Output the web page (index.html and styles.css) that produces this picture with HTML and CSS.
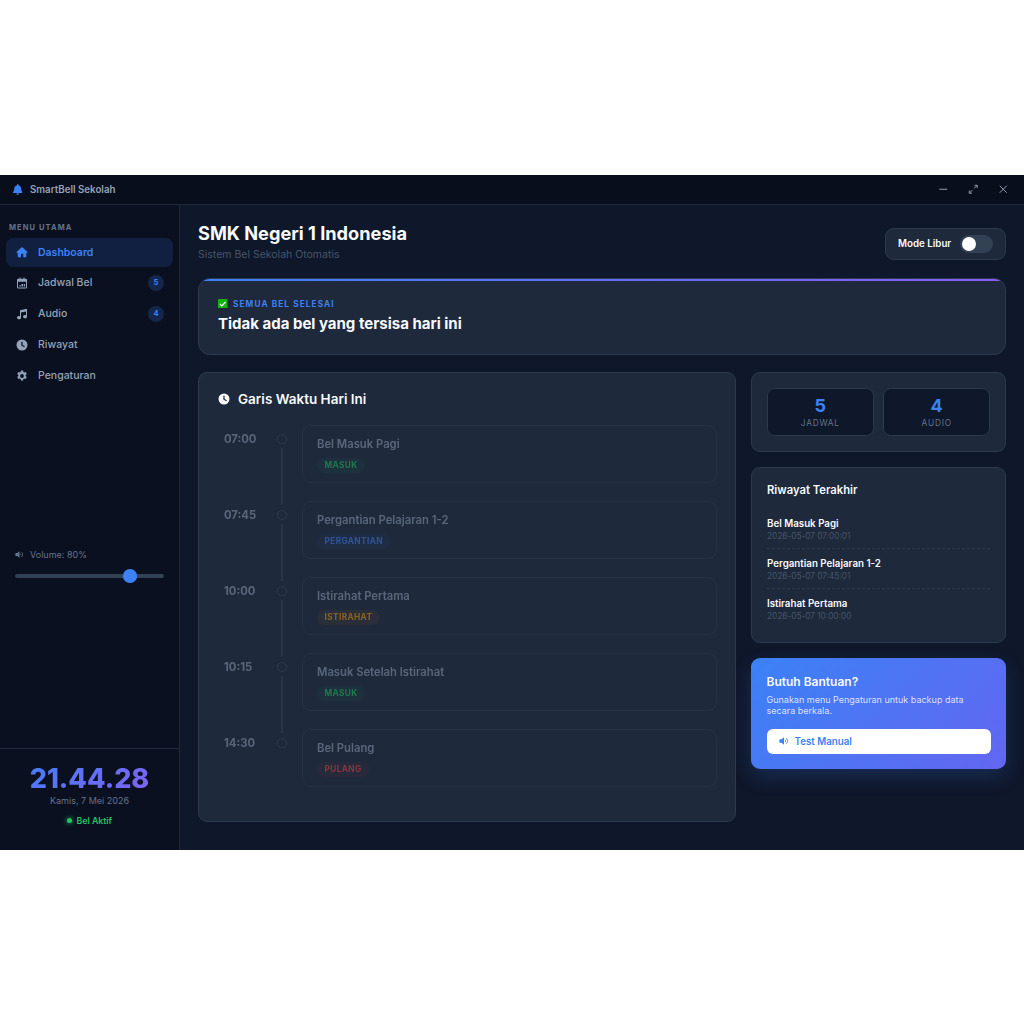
FILE: index.html
```html
<!DOCTYPE html>
<html lang="id">
<head>
  <meta charset="UTF-8">
  <title>SmartBell Sekolah</title>
  <link rel="stylesheet" href="styles.css">
</head>
<body>
  <svg class="defs" width="0" height="0">
    <symbol id="i-bell" viewBox="0 0 448 512"><path d="M224 512c35.32 0 63.97-28.65 63.97-64H160.03c0 35.35 28.65 64 63.97 64zm215.39-149.71c-19.32-20.76-55.47-51.99-55.47-154.29 0-77.7-54.48-139.9-127.94-155.16V32c0-17.67-14.32-32-31.98-32s-31.98 14.33-31.98 32v20.84C118.56 68.1 64.08 130.3 64.08 208c0 102.3-36.15 133.53-55.47 154.29-6 6.45-8.66 14.16-8.61 21.71.11 16.4 12.98 32 32.1 32h383.8c19.12 0 32-15.6 32.1-32 .05-7.55-2.61-15.27-8.61-21.71z"/></symbol>
    <symbol id="i-home" viewBox="0 0 24 24"><path d="M12 2 0.500 12.400l1.500 1.700 1.500-1.300V21a1.500 1.500 0 0 0 1.500 1.500h5V15.500h4.500v7h5A1.500 1.500 0 0 0 20.500 21v-8.200l1.500 1.300 1.500-1.700z"/></symbol>
    <symbol id="i-cal" viewBox="0 0 24 24"><path fill-rule="evenodd" d="M7 1h2v2.500h6V1h2v2.500h2.500A2.500 2.500 0 0 1 22 6v14.500a2.500 2.500 0 0 1-2.500 2.500h-15A2.500 2.500 0 0 1 2 20.500V6a2.500 2.500 0 0 1 2.500-2.500H7zM4 9.500v11a.5.5 0 0 0 .5.5h15a.5.5 0 0 0 .5-.5v-11z"/><path d="M11 14h3v5h-3zM15.500 14H18v5h-2.500zM7 16h2.500v3H7z"/></symbol>
    <symbol id="i-music" viewBox="0 0 24 24"><path d="M22 1.500 8 4.500V16.700A4.200 4.200 0 0 0 6 16.200c-2.300 0-4 1.400-4 3.200s1.700 3.100 4 3.100 4-1.400 4-3.200V9.200l10-2.100v7.600a4.200 4.200 0 0 0-2-.5c-2.300 0-4 1.400-4 3.200s1.700 3.100 4 3.100 4-1.400 4-3.200z"/></symbol>
    <symbol id="i-clock" viewBox="0 0 24 24"><path fill-rule="evenodd" d="M12 1a11 11 0 1 1 0 22 11 11 0 0 1 0-22zm-1.300 4.500v7.700l5.800 3.400 1.200-2-4.500-2.600V5.500z"/></symbol>
    <symbol id="i-gear" viewBox="0 0 24 24"><path fill-rule="evenodd" d="M14.200 1l.5 3.100 1.700 1 2.900-1.100 2.200 3.800-2.400 2 .1 1.200-.1 1.200 2.400 2-2.200 3.800-2.900-1.100-1.700 1-.5 3.100H9.800l-.5-3.100-1.700-1-2.900 1.100-2.200-3.800 2.400-2-.1-1.200.1-1.200-2.400-2L4.700 4l2.900 1.100 1.700-1L9.800 1zM12 8.200a3.800 3.800 0 1 0 0 7.600 3.800 3.800 0 0 0 0-7.600z"/></symbol>
    <symbol id="i-vol" viewBox="0 0 24 24"><path d="M12 3v18l-6-5H2a1 1 0 0 1-1-1V9a1 1 0 0 1 1-1h4zM15 8.500a4.500 4.500 0 0 1 0 7zM18 5a9 9 0 0 1 0 14l-1-1.600a7 7 0 0 0 0-10.800z"/></symbol>
  </svg>

  <div class="app">
    <header class="titlebar">
      <div class="brand">
        <svg class="brand-icon"><use href="#i-bell"/></svg>
        <span>SmartBell Sekolah</span>
      </div>
      <div class="win-btns">
        <svg viewBox="0 0 12 12"><path d="M1.500 6h9"/></svg>
        <svg viewBox="0 0 12 12"><path d="M7 5l3.500-3.500M7.500 1.500h3v3M5 7l-3.500 3.500M4.500 10.500h-3v-3"/></svg>
        <svg viewBox="0 0 12 12"><path d="M2 2l8 8M10 2l-8 8"/></svg>
      </div>
    </header>

    <div class="body">
      <aside class="sidebar">
        <div class="menu-label">MENU UTAMA</div>
        <nav class="nav">
          <a class="nav-item active"><svg><use href="#i-home"/></svg><span>Dashboard</span></a>
          <a class="nav-item"><svg><use href="#i-cal"/></svg><span>Jadwal Bel</span><b class="count">5</b></a>
          <a class="nav-item"><svg><use href="#i-music"/></svg><span>Audio</span><b class="count">4</b></a>
          <a class="nav-item"><svg><use href="#i-clock"/></svg><span>Riwayat</span></a>
          <a class="nav-item"><svg><use href="#i-gear"/></svg><span>Pengaturan</span></a>
        </nav>
        <div class="volume">
          <div class="volume-label"><svg><use href="#i-vol"/></svg><span>Volume: 80%</span></div>
          <input class="volume-range" type="range" min="0" max="100" value="80">
        </div>
        <div class="clock-box">
          <div class="clock">21.44.28</div>
          <div class="clock-date">Kamis, 7 Mei 2026</div>
          <div class="bell-status"><i class="status-dot"></i>Bel Aktif</div>
        </div>
      </aside>

      <main class="main">
        <div class="page-head">
          <div class="page-title">
            <h1>SMK Negeri 1 Indonesia</h1>
            <p>Sistem Bel Sekolah Otomatis</p>
          </div>
          <div class="holiday">
            <span>Mode Libur</span>
            <div class="switch"><i></i></div>
          </div>
        </div>

        <section class="banner">
          <div class="banner-label">
            <svg class="check" viewBox="0 0 10 10"><rect width="10" height="10" rx="1"/><path d="M2 5.200l2.100 2.100L8 3"/></svg>
            <span>SEMUA BEL SELESAI</span>
          </div>
          <div class="banner-title">Tidak ada bel yang tersisa hari ini</div>
        </section>

        <div class="columns">
          <section class="card timeline">
            <h2 class="timeline-title"><svg><use href="#i-clock"/></svg>Garis Waktu Hari Ini</h2>

            <div class="tl-row">
              <div class="tl-time">07:00</div>
              <div class="tl-axis"><i class="tl-dot"></i><i class="tl-line"></i></div>
              <div class="tl-card"><div class="tl-name">Bel Masuk Pagi</div><span class="tag tag-green">MASUK</span></div>
            </div>
            <div class="tl-row">
              <div class="tl-time">07:45</div>
              <div class="tl-axis"><i class="tl-dot"></i><i class="tl-line"></i></div>
              <div class="tl-card"><div class="tl-name">Pergantian Pelajaran 1-2</div><span class="tag tag-blue">PERGANTIAN</span></div>
            </div>
            <div class="tl-row">
              <div class="tl-time">10:00</div>
              <div class="tl-axis"><i class="tl-dot"></i><i class="tl-line"></i></div>
              <div class="tl-card"><div class="tl-name">Istirahat Pertama</div><span class="tag tag-amber">ISTIRAHAT</span></div>
            </div>
            <div class="tl-row">
              <div class="tl-time">10:15</div>
              <div class="tl-axis"><i class="tl-dot"></i><i class="tl-line"></i></div>
              <div class="tl-card"><div class="tl-name">Masuk Setelah Istirahat</div><span class="tag tag-green">MASUK</span></div>
            </div>
            <div class="tl-row">
              <div class="tl-time">14:30</div>
              <div class="tl-axis"><i class="tl-dot"></i></div>
              <div class="tl-card"><div class="tl-name">Bel Pulang</div><span class="tag tag-red">PULANG</span></div>
            </div>
          </section>

          <div class="side-col">
            <section class="card stats">
              <div class="stat"><strong>5</strong><span>JADWAL</span></div>
              <div class="stat"><strong>4</strong><span>AUDIO</span></div>
            </section>

            <section class="card history">
              <h3>Riwayat Terakhir</h3>
              <div class="hist-item"><div class="hist-name">Bel Masuk Pagi</div><div class="hist-date">2026-05-07 07:00:01</div></div>
              <div class="hist-item"><div class="hist-name">Pergantian Pelajaran 1-2</div><div class="hist-date">2026-05-07 07:45:01</div></div>
              <div class="hist-item"><div class="hist-name">Istirahat Pertama</div><div class="hist-date">2026-05-07 10:00:00</div></div>
            </section>

            <section class="help">
              <h3>Butuh Bantuan?</h3>
              <p>Gunakan menu Pengaturan untuk backup data secara berkala.</p>
              <button class="test-btn"><svg><use href="#i-vol"/></svg>Test Manual</button>
            </section>
          </div>
        </div>
      </main>
    </div>
  </div>
</body>
</html>
```

FILE: styles.css
```css
* {
  box-sizing: border-box;
  margin: 0;
  padding: 0;
}
body {
  font-family: 'Inter', 'Liberation Sans', sans-serif;
  background: #ffffff;
  height: 100vh;
  display: flex;
  align-items: center;
  overflow: hidden;
}
.defs {
  position: absolute;
}
svg {
  fill: currentColor;
  flex: none;
}
.app {
  width: 100%;
  height: 675px;
  background: #0f172a;
  color: #f8fafc;
  display: flex;
  flex-direction: column;
}

/* title bar */
.titlebar {
  height: 30px;
  flex: none;
  background: #090e1c;
  border-bottom: 1.500px solid #1e293b;
  display: flex;
  align-items: center;
  justify-content: space-between;
  padding: 0 16px 0 13px;
}
.brand {
  display: flex;
  align-items: center;
  gap: 7.500px;
  font-size: 9.750px;
  font-weight: 600;
  color: #94a3b8;
}
.brand-icon {
  width: 9.500px;
  height: 11px;
  color: #3b82f6;
}
.win-btns {
  display: flex;
  gap: 19.500px;
}
.win-btns svg {
  width: 10.500px;
  height: 10.500px;
  fill: none;
  stroke: #94a3b8;
  stroke-width: 1.100;
}

.body {
  flex: 1;
  display: flex;
  min-height: 0;
}

/* sidebar */
.sidebar {
  width: 180px;
  flex: none;
  background: #0a1020;
  border-right: 1px solid #1e293b;
  display: flex;
  flex-direction: column;
}
.menu-label {
  font-size: 7.500px;
  font-weight: 700;
  letter-spacing: 1.100px;
  color: #64748b;
  padding: 18px 9px 6px;
}
.nav {
  padding: 0 6px;
  display: flex;
  flex-direction: column;
  gap: 1.900px;
}
.nav-item {
  height: 29px;
  display: flex;
  align-items: center;
  gap: 10px;
  padding: 0 9px 0 10px;
  border-radius: 7.500px;
  font-size: 10.500px;
  font-weight: 500;
  color: #94a3b8;
}
.nav-item svg {
  width: 12px;
  height: 12px;
}
.nav-item.active {
  background: rgba(59, 130, 246, 0.15);
  color: #3b82f6;
  font-weight: 600;
}
.count {
  margin-left: auto;
  width: 16px;
  height: 16px;
  border-radius: 50%;
  background: rgba(59, 130, 246, 0.2);
  color: #3b82f6;
  font-size: 7.500px;
  font-weight: 700;
  display: flex;
  align-items: center;
  justify-content: center;
}
.volume {
  margin-top: auto;
  margin-bottom: 165px;
  padding: 0 15px;
}
.volume-label {
  display: flex;
  align-items: center;
  gap: 6px;
  font-size: 9px;
  color: #64748b;
  margin-bottom: 9px;
}
.volume-label svg {
  width: 9px;
  height: 9px;
}
.volume-range {
  display: block;
  width: 100%;
  height: 13.500px;
  margin: 0;
  background: transparent;
  -webkit-appearance: none;
  appearance: none;
}
.volume-range::-webkit-slider-runnable-track {
  height: 4.500px;
  border-radius: 3px;
  background: #334155;
}
.volume-range::-webkit-slider-thumb {
  -webkit-appearance: none;
  width: 13.500px;
  height: 13.500px;
  margin-top: -4.500px;
  border-radius: 50%;
  background: #3b82f6;
}
.clock-box {
  height: 102px;
  flex: none;
  border-top: 1px solid #1e293b;
  padding-top: 14px;
  text-align: center;
}
.clock {
  font-size: 27px;
  line-height: 32px;
  font-weight: 800;
  background: linear-gradient(135deg, #3b82f6, #8b5cf6);
  -webkit-background-clip: text;
  background-clip: text;
  color: transparent;
}
.clock-date {
  font-size: 9px;
  line-height: 12px;
  color: #64748b;
}
.bell-status {
  display: flex;
  align-items: center;
  justify-content: center;
  gap: 4.500px;
  margin-top: 8px;
  font-size: 8.750px;
  line-height: 12px;
  font-weight: 600;
  color: #22c55e;
}
.status-dot {
  width: 5px;
  height: 5px;
  border-radius: 50%;
  background: #22c55e;
  box-shadow: 0 0 5px #22c55e;
}

/* main */
.main {
  flex: 1;
  min-width: 0;
  padding: 18px;
}
.page-head {
  height: 37px;
  display: flex;
  justify-content: space-between;
  align-items: flex-end;
  margin-bottom: 18px;
}
.page-title {
  align-self: flex-start;
}
h1 {
  font-size: 18.200px;
  line-height: 20px;
  font-weight: 700;
}
.page-head p {
  font-size: 10.500px;
  line-height: 14px;
  margin-top: 5px;
  color: #475569;
}
.holiday {
  width: 121px;
  height: 32px;
  display: flex;
  align-items: center;
  gap: 9px;
  padding: 0 12px;
  background: #1e293b;
  border: 1px solid #2c3a4f;
  border-radius: 9px;
  font-size: 9.750px;
  font-weight: 600;
  white-space: nowrap;
}
.switch {
  width: 33px;
  height: 18px;
  flex: none;
  border-radius: 9px;
  background: #334155;
  padding: 2px;
}
.switch i {
  display: block;
  width: 14px;
  height: 14px;
  border-radius: 50%;
  background: #ffffff;
}
.banner {
  height: 77px;
  background: #1e293b;
  border: 1px solid #2c3a4f;
  border-radius: 12px;
  padding: 19px 19px 0;
  margin-bottom: 17.750px;
  position: relative;
  overflow: hidden;
}
.banner::before {
  content: "";
  position: absolute;
  top: 0;
  left: 0;
  right: 0;
  height: 2.500px;
  background: linear-gradient(90deg, #3b82f6, #8b5cf6);
}
.banner-label {
  display: flex;
  align-items: center;
  gap: 5.500px;
  font-size: 8.250px;
  line-height: 12px;
  font-weight: 700;
  letter-spacing: 1.100px;
  color: #3b82f6;
}
.check {
  width: 9.500px;
  height: 9.500px;
  fill: #12b312;
  stroke: none;
}
.check path {
  fill: none;
  stroke: #ffffff;
  stroke-width: 1.300;
}
.banner-title {
  font-size: 15px;
  line-height: 18px;
  font-weight: 700;
  margin-top: 5px;
}
.columns {
  display: grid;
  grid-template-columns: 1fr 255px;
  gap: 15px;
  align-items: start;
}
.card {
  background: #1e293b;
  border: 1px solid #2c3a4f;
  border-radius: 9px;
}

/* timeline */
.timeline {
  height: 450px;
  padding: 17px 18px 0 19px;
}
.timeline-title {
  display: flex;
  align-items: center;
  gap: 8px;
  font-size: 13.500px;
  line-height: 18px;
  font-weight: 600;
  margin-bottom: 16.500px;
}
.timeline-title svg {
  width: 12px;
  height: 12px;
}
.tl-row {
  display: flex;
  height: 76px;
  padding-left: 6px;
  opacity: 0.5;
}
.tl-time {
  width: 48px;
  flex: none;
  padding-top: 7.500px;
  font-size: 11.250px;
  line-height: 14px;
  font-weight: 700;
  color: #94a3b8;
}
.tl-axis {
  width: 20px;
  flex: none;
  display: flex;
  flex-direction: column;
  align-items: center;
  padding-top: 9px;
  margin-right: 10px;
}
.tl-dot {
  width: 10px;
  height: 10px;
  flex: none;
  border-radius: 50%;
  border: 1.500px solid #3b4a60;
}
.tl-line {
  flex: 1;
  width: 1.500px;
  background: #334155;
  margin: 4px 0 -4px;
}
.tl-card {
  flex: 1;
  height: 58px;
  border: 1px solid #2c3a4f;
  border-radius: 9px;
  padding: 11px 14px 0;
}
.tl-name {
  font-size: 11.250px;
  line-height: 15px;
  font-weight: 600;
  color: #94a3b8;
}
.tag {
  display: inline-block;
  margin-top: 4px;
  height: 15px;
  line-height: 15px;
  padding: 0 7.500px;
  border-radius: 8px;
  font-size: 8.250px;
  font-weight: 700;
  letter-spacing: 0.400px;
}
.tag-green {
  color: #22c55e;
  background: rgba(34, 197, 94, 0.1);
}
.tag-blue {
  color: #3b82f6;
  background: rgba(59, 130, 246, 0.1);
}
.tag-amber {
  color: #f59e0b;
  background: rgba(245, 158, 11, 0.1);
}
.tag-red {
  color: #ef4444;
  background: rgba(239, 68, 68, 0.1);
}

/* right column */
.side-col {
  display: flex;
  flex-direction: column;
  gap: 15px;
}
.stats {
  height: 80px;
  display: grid;
  grid-template-columns: 1fr 1fr;
  gap: 9.750px;
  padding: 15px;
}
.stat {
  background: #0f172a;
  border: 1px solid #2c3a4f;
  border-radius: 7.500px;
  text-align: center;
  padding-top: 5px;
}
.stat strong {
  display: block;
  font-size: 18px;
  line-height: 23px;
  font-weight: 700;
  color: #3b82f6;
}
.stat span {
  display: block;
  font-size: 8.250px;
  line-height: 12px;
  letter-spacing: 0.800px;
  color: #64748b;
}
.history {
  height: 176px;
  padding: 15px;
}
.history h3 {
  font-size: 11.250px;
  line-height: 15px;
  font-weight: 600;
  margin-bottom: 10.500px;
}
.hist-item {
  height: 40px;
  padding-top: 9px;
  border-bottom: 1px dashed #2c3a4f;
}
.hist-item:last-child {
  border-bottom: none;
}
.hist-name {
  font-size: 9.750px;
  line-height: 12px;
  font-weight: 600;
}
.hist-date {
  font-size: 8.250px;
  line-height: 12px;
  color: #475569;
}
.help {
  height: 111px;
  padding: 15.500px 15.500px;
  border-radius: 9px;
  background: linear-gradient(135deg, #3b82f6, #6366f1);
  box-shadow: 0 8px 20px rgba(59, 130, 246, 0.2);
}
.help h3 {
  font-size: 12px;
  line-height: 15px;
  font-weight: 600;
}
.help p {
  font-size: 9px;
  line-height: 11px;
  margin-top: 5px;
  color: rgba(255, 255, 255, 0.8);
}
.test-btn {
  width: 100%;
  height: 25px;
  margin-top: 13px;
  border: none;
  border-radius: 6px;
  background: #ffffff;
  color: #3b82f6;
  font-family: inherit;
  font-size: 9.750px;
  font-weight: 600;
  display: flex;
  align-items: center;
  gap: 6px;
  padding: 0 12px;
}
.test-btn svg {
  width: 10px;
  height: 10px;
}
```
